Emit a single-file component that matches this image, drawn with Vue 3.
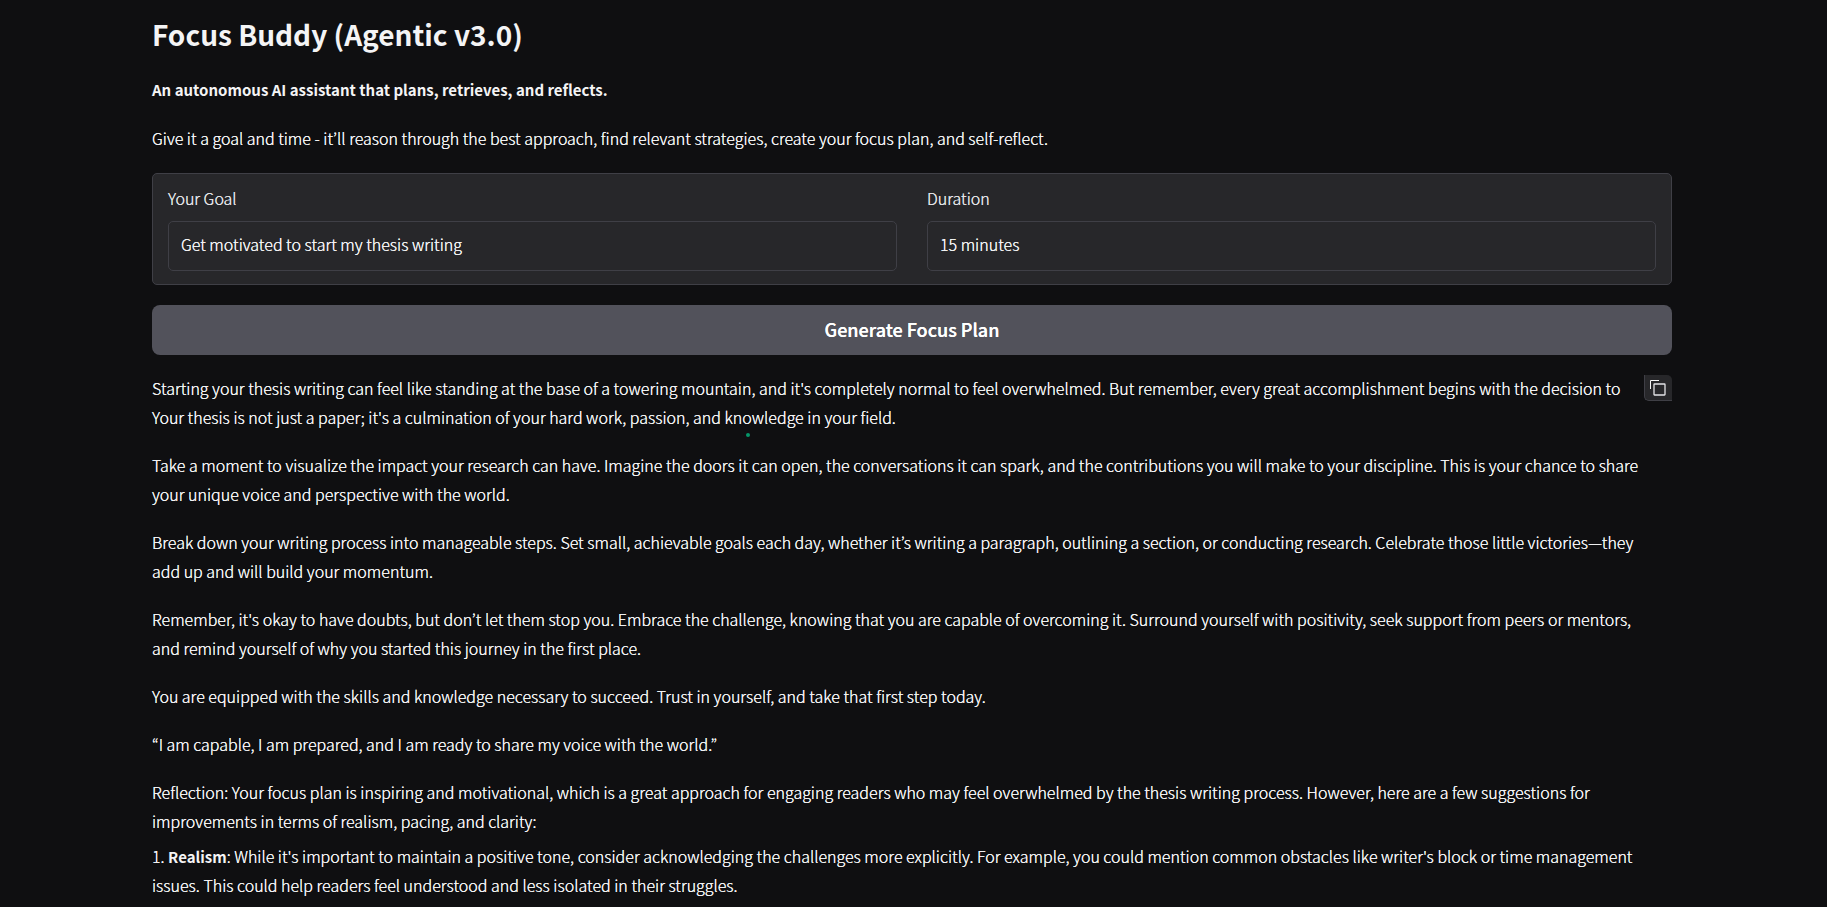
<script setup>
import { ref } from 'vue'

const goal = ref('Get motivated to start my thesis writing')
const duration = ref('15 minutes')

const paragraphs = [
  "Starting your thesis writing can feel like standing at the base of a towering mountain, and it's completely normal to feel overwhelmed. But remember, every great accomplishment begins with the decision to\nYour thesis is not just a paper; it's a culmination of your hard work, passion, and knowledge in your field.",
  'Take a moment to visualize the impact your research can have. Imagine the doors it can open, the conversations it can spark, and the contributions you will make to your discipline. This is your chance to share\nyour unique voice and perspective with the world.',
  'Break down your writing process into manageable steps. Set small, achievable goals each day, whether it’s writing a paragraph, outlining a section, or conducting research. Celebrate those little victories—they\nadd up and will build your momentum.',
  "Remember, it's okay to have doubts, but don’t let them stop you. Embrace the challenge, knowing that you are capable of overcoming it. Surround yourself with positivity, seek support from peers or mentors,\nand remind yourself of why you started this journey in the first place.",
  'You are equipped with the skills and knowledge necessary to succeed. Trust in yourself, and take that first step today.',
  '“I am capable, I am prepared, and I am ready to share my voice with the world.”',
  'Reflection: Your focus plan is inspiring and motivational, which is a great approach for engaging readers who may feel overwhelmed by the thesis writing process. However, here are a few suggestions for\nimprovements in terms of realism, pacing, and clarity:',
]
</script>

<template>
  <main class="page">
    <header class="intro">
      <h1>Focus Buddy (Agentic v3.0)</h1>
      <p><strong>An autonomous AI assistant that plans, retrieves, and reflects.</strong></p>
      <p>Give it a goal and time - it’ll reason through the best approach, find relevant strategies, create your focus plan, and self-reflect.</p>
    </header>

    <form class="panel" @submit.prevent>
      <div class="field">
        <label for="goal">Your Goal</label>
        <input id="goal" v-model="goal" type="text" />
      </div>
      <div class="field">
        <label for="duration">Duration</label>
        <input id="duration" v-model="duration" type="text" />
      </div>
    </form>

    <button class="generate" type="button">Generate Focus Plan</button>

    <section class="output">
      <button class="copy" type="button" aria-label="Copy">
        <svg viewBox="0 0 16 16" width="16" height="16" fill="none" aria-hidden="true">
          <path d="M.5 9V.5H9" stroke="#f4f4f5" />
          <rect x="4" y="4" width="11" height="11" rx=".5" stroke="#e4e4e7" stroke-width="1.3" />
        </svg>
      </button>
      <span class="dot"></span>
      <p v-for="text in paragraphs" :key="text">{{ text }}</p>
      <ol>
        <li>1. <strong>Realism</strong>: While it's important to maintain a positive tone, consider acknowledging the challenges more explicitly. For example, you could mention common obstacles like writer's block or time management issues. This could help readers feel understood and less isolated in their struggles.</li>
      </ol>
    </section>
  </main>
</template>

<style>
html,
body {
  background: #0f0f11;
}
body {
  margin: 0;
  overflow-x: hidden;
}
</style>

<style scoped>
.page {
  box-sizing: border-box;
  padding: 12px 155px 5px 152px;
  color: #f4f4f5;
  font-family: "Noto Sans CJK KR", "Noto Sans", sans-serif;
  font-size: 16px;
  font-weight: 300;
  line-height: 29px;
  text-shadow: 0 0 currentColor;
}
h1 {
  margin: 0;
  font-size: 28px;
  line-height: 44px;
  font-weight: 600;
  text-shadow: none;
}
p {
  margin: 19px 0 0;
  white-space: pre-line;
}
strong {
  font-size: 15px;
  font-weight: 600;
  text-shadow: none;
}
.panel {
  display: flex;
  gap: 30px;
  margin-top: 20px;
  padding: 10px 15px 13px;
  background: #27272a;
  border: 1px solid #3f3f46;
  border-radius: 5px;
}
.intro p:last-child {
  margin-top: 20px;
}
.field {
  display: flex;
  flex: 1;
  flex-direction: column;
  gap: 8px;
  min-width: 0;
}
label {
  color: #e4e4e7;
}
input {
  box-sizing: border-box;
  width: 100%;
  height: 50px;
  padding: 0 12px 4px;
  border: 1px solid #3f3f46;
  border-radius: 5px;
  outline: 0;
  background: #27272a;
  color: inherit;
  font: inherit;
  text-shadow: inherit;
}
button {
  border: 0;
  font: inherit;
  cursor: pointer;
}
.generate {
  display: block;
  width: 100%;
  height: 50px;
  margin: 20px 0 19px;
  padding: 0 0 1px;
  border-radius: 8px;
  background: #52525b;
  color: #fff;
  font-size: 18px;
  font-weight: 500;
  text-shadow: 0 0 currentColor;
}
.output {
  position: relative;
}
.output p:first-of-type {
  margin-top: 0;
}
.copy {
  position: absolute;
  top: 1px;
  right: 0;
  display: flex;
  align-items: center;
  justify-content: center;
  width: 28px;
  height: 26px;
  padding: 0 2px 0 0;
  border: 1px solid #3f3f46;
  border-width: 0 0 1px 1px;
  border-radius: 0 5px 0 5px;
  background: #27272a;
}
.dot {
  position: absolute;
  top: 59px;
  left: 594px;
  width: 4px;
  height: 4px;
  border-radius: 50%;
  background: #059669;
}
ol {
  margin: 6px 0 0;
  padding: 0;
  list-style: none;
}
</style>
